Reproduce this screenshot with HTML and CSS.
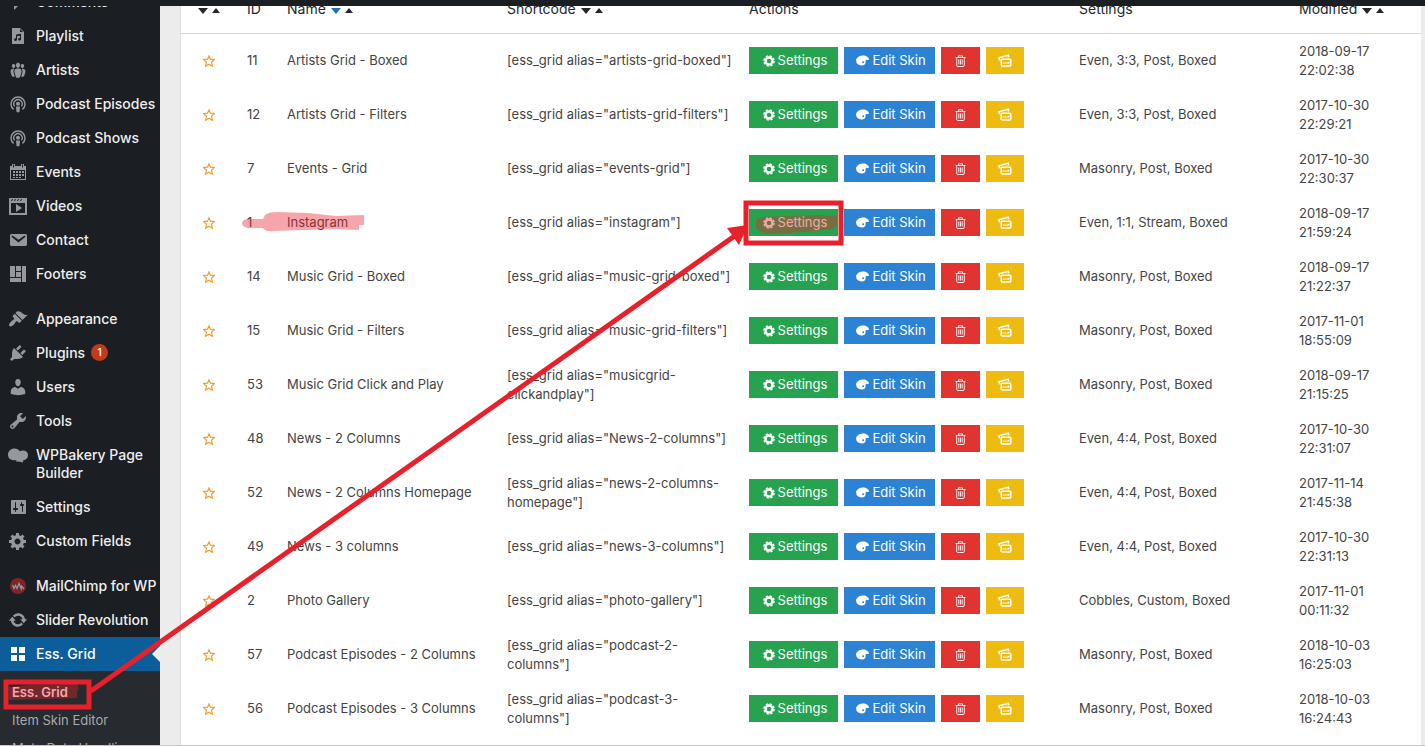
FILE: index.html
```html
<!DOCTYPE html>
<html lang="en">
<head>
    <meta charset="UTF-8">
    <title>Ess. Grid</title>
    <meta name="viewport" content="width=device-width, initial-scale=1.0"/>
    <link rel="stylesheet" href="styles.css">
</head>
<body>
    <!-- shared icons -->
    <svg class="icon-defs" aria-hidden="true">
        <symbol id="i-podcast" viewBox="0 0 20 20">
            <g fill="none" stroke="currentColor">
                <path d="M5.6 15.4a7 7 0 1 1 8.8 0" stroke-width="1.5"/>
                <path d="M6.6 12.4a4.2 4.2 0 1 1 6.8 0" stroke-width="1.4"/>
            </g>
            <circle cx="10" cy="9.7" r="2"/>
            <path d="M8 12.6h4l-.5 5.2q-1.500 1.200-3 0z"/>
        </symbol>
        <symbol id="i-star" viewBox="0 0 12 12">
            <path d="M6 .9l1.500 3.300 3.900.4-2.900 2.600.9 4L6 9.200l-3.400 2 .9-4L.6 4.600l3.900-.4z" fill="none" stroke="currentColor" stroke-width="1.200"/>
        </symbol>
        <symbol id="i-cog" viewBox="0 0 12 12">
            <g fill="none" stroke="currentColor">
                <circle cx="6" cy="6" r="3.500" stroke-width="2.400"/>
                <circle cx="6" cy="6" r="5.100" stroke-width="1.400" stroke-dasharray="2.400 1.600"/>
            </g>
        </symbol>
        <symbol id="i-palette" viewBox="0 0 13 11">
            <path fill-rule="evenodd" d="M6.300.5C9.800.1 12.800 2 12.900 4.200c0 1.100-1 .8-2.200.7-1.300-.1-1.200.8-1.100 1.800.2 2.100-1.100 3.800-4 3.800C2.300 10.500.1 8.300.1 5.600.1 2.900 3 .9 6.300.5zM7.200 6.200a1 1 0 1 0 0 2 1 1 0 0 0 0-2z"/>
        </symbol>
        <symbol id="i-trash" viewBox="0 0 11 12">
            <path d="M.5 2.500h10M3.500 2.300V.8h4v1.500M1.700 2.700v7.500q0 1.300 1.300 1.300h5q1.300 0 1.300-1.300V2.700M3.800 4.500V9.500M5.500 4.500V9.500M7.200 4.500V9.500" fill="none" stroke="currentColor" stroke-width=".9"/>
        </symbol>
        <symbol id="i-pictures" viewBox="0 0 14 13">
            <path d="M1.500 6.300L1 3.800l9.200-2.600.5 2.300" fill="none" stroke="currentColor" stroke-width="1.700"/>
            <rect x="3.200" y="5.300" width="9.600" height="6.700" rx="1" fill="none" stroke="currentColor" stroke-width="1.500"/>
            <path d="M4.500 8.200l1.700.9 1.300-.9 1.300.7 2.700-1.700v2.300h-7z"/>
        </symbol>
    </svg>

    <div class="admin-bar"></div>

    <div class="wrap">
        <nav class="sidebar">
            <ul class="menu">
                <li><a href="#"><svg class="icon" viewBox="0 0 20 20"><path d="M5 2h9q2 0 2 2v7q0 2-2 2h-3l-5 5v-5H5q-2 0-2-2V4q0-2 2-2z"/></svg><span>Comments</span></a></li>
                <li><a href="#"><svg class="icon" viewBox="0 0 20 20"><path d="M12 2l4 4v12H4V2h8zm0 4h3l-3-3v3zm1 7.260V8.090c0-.11-.04-.21-.12-.29-.07-.08-.16-.11-.27-.1 0 0-3.970.71-4.250.78C8.070 8.540 8 8.800 8 9v3.370c-.2-.09-.42-.07-.6-.07-.38 0-.7.13-.96.39-.26.27-.4.58-.4.96 0 .37.14.69.4.95.26.27.58.4.96.4.34 0 .7-.04.96-.26.26-.23.64-.65.64-1.120V10.300l3-.6V12c-.67-.2-1.170.04-1.440.31-.26.26-.39.58-.39.95 0 .38.13.69.39.96.27.26.71.39 1.080.39.38 0 .7-.13.96-.39.26-.27.4-.58.4-.96z"/></svg><span>Playlist</span></a></li>
                <li><a href="#"><svg class="icon" viewBox="0 0 20 20"><path d="M8.030 4.460c-.29 1.280.55 3.460 1.970 3.460 1.410 0 2.250-2.180 1.960-3.460-.22-.98-1.080-1.630-1.960-1.630-.89 0-1.740.65-1.970 1.630zm-4.130.9c-.25 1.080.47 2.930 1.670 2.930s1.920-1.850 1.670-2.930c-.19-.83-.92-1.390-1.670-1.390s-1.480.56-1.670 1.390zm8.860 0c-.25 1.080.47 2.930 1.660 2.930 1.200 0 1.920-1.850 1.670-2.930-.19-.83-.92-1.390-1.670-1.390-.74 0-1.470.56-1.660 1.390zm-.59 11.430l1.250-4.300C14.200 10 12.710 8.470 10 8.470c-2.720 0-4.210 1.530-3.440 4.020l1.260 4.300C8.050 17.510 9 18 10 18c.98 0 1.940-.49 2.170-1.210zm-6.100-7.630c-.49.67-.96 1.830-.42 3.590l1.120 3.790c-.34.2-.77.31-1.200.31-.85 0-1.650-.41-1.850-1.030l-1.070-3.650c-.65-2.110.61-3.400 2.920-3.400.27 0 .54.02.79.06-.1.1-.2.22-.29.33zm8.350-.39c2.310 0 3.580 1.290 2.920 3.400l-1.070 3.650c-.2.62-1 1.030-1.850 1.030-.43 0-.86-.11-1.200-.31l1.110-3.770c.55-1.780.08-2.940-.42-3.610-.08-.11-.18-.23-.28-.33.25-.04.51-.06.79-.06z"/></svg><span>Artists</span></a></li>
                <li><a href="#"><svg class="icon"><use href="#i-podcast"/></svg><span>Podcast Episodes</span></a></li>
                <li><a href="#"><svg class="icon"><use href="#i-podcast"/></svg><span>Podcast Shows</span></a></li>
                <li><a href="#"><svg class="icon" viewBox="0 0 20 20"><path fill-rule="evenodd" d="M2 4h2V2h3v2h6V2h3v2h2v14H2zm1 4v9h14V8zM5 2.500v3h1v-3zm9 0v3h1v-3z"/><path d="M8 9h2v2H8zm3 0h2v2h-2zm3 0h2v2h-2zM5 12h2v2H5zm3 0h2v2H8zm3 0h2v2h-2zm3 0h2v2h-2zM5 15h2v1H5zm3 0h2v1H8zm3 0h2v1h-2zM5 9h2v2H5z"/></svg><span>Events</span></a></li>
                <li><a href="#"><svg class="icon" viewBox="0 0 20 20"><path fill-rule="evenodd" d="M1 2h18v17H1zm2 5v10h14V7zM4 3L3 5h1l1-2zm3 0L6 5h1l1-2zm3 0L9 5h1l1-2zm3 0l-1 2h1l1-2z"/><path d="M8 8l6 4-6 4z"/></svg><span>Videos</span></a></li>
                <li><a href="#"><svg class="icon" viewBox="0 0 20 20"><path d="M3.870 4h13.250C18.370 4 19 4.590 19 5.790v8.420c0 1.190-.63 1.790-1.880 1.790H3.870c-1.250 0-1.880-.6-1.880-1.790V5.790c0-1.200.63-1.790 1.880-1.790zm6.620 8.600l6.740-5.530c.24-.2.43-.66.13-1.070-.29-.41-.82-.42-1.170-.17l-5.700 3.860L4.800 5.830c-.35-.25-.88-.24-1.170.17-.3.41-.11.87.13 1.070z"/></svg><span>Contact</span></a></li>
                <li><a href="#"><svg class="icon" viewBox="0 0 20 20"><path d="M2 2h5v11H2zm6 0h5v5H8zm6 0h4v16h-4zM8 8h5v5H8zm-6 6h11v4H2z"/></svg><span>Footers</span></a></li>
            </ul>
            <ul class="menu">
                <li><a href="#"><svg class="icon" viewBox="0 0 20 20"><path d="M14.480 11.060L7.410 3.990l1.500-1.500c.5-.56 2.300-.47 3.510.32 1.210.8 1.430 1.280 2.910 2.100 1.180.64 2.450 1.260 4.450.85zm-.71.71L6.700 4.700 4.930 6.470c-.39.39-.39 1.020 0 1.410l1.060 1.060c.39.39.39 1.030 0 1.420-.6.6-1.430 1.110-2.210 1.690-.35.26-.7.53-1.010.84C1.430 14.230.4 16.080 1.400 17.070c.99 1 2.840-.03 4.180-1.360.31-.31.58-.66.85-1.020.57-.78 1.080-1.610 1.690-2.210.39-.39 1.020-.39 1.410 0l1.060 1.060c.39.39 1.020.39 1.410 0z"/></svg><span>Appearance</span></a></li>
                <li><a href="#"><svg class="icon" viewBox="0 0 20 20"><path d="M13.110 4.360L9.870 7.600 8 5.730l3.240-3.240c.35-.34 1.050-.2 1.560.32.52.51.66 1.210.31 1.550zm-8 1.770l.91-1.120 9.010 9.010-1.190.84c-.71.71-2.630 1.160-3.820 1.160H6.140L4.900 17.260c-.59.59-1.540.59-2.120 0-.59-.58-.59-1.530 0-2.120l1.240-1.240v-3.880c0-1.130.4-3.190 1.090-3.890zm7.260 3.970l3.240-3.240c.34-.35 1.040-.21 1.550.31.52.51.66 1.210.31 1.550l-3.240 3.250z"/></svg><span>Plugins</span><span class="count">1</span></a></li>
                <li><a href="#"><svg class="icon" viewBox="0 0 20 20"><path d="M10 9.250c-2.270 0-2.730-3.440-2.730-3.440C7 4.020 7.820 2 9.970 2c2.160 0 2.980 2.020 2.710 3.810 0 0-.41 3.440-2.680 3.440zM7.300 10L10 11.820 12.720 10c2.390 0 4.520 2.330 4.520 4.530v2.490s-3.650 1.130-7.240 1.130c-3.650 0-7.240-1.130-7.240-1.130v-2.490c0-2.250 1.940-4.480 4.540-4.530z"/></svg><span>Users</span></a></li>
                <li><a href="#"><svg class="icon" viewBox="0 0 20 20"><path d="M16.680 9.770c-1.340 1.340-3.300 1.670-4.950.99l-5.410 6.520c-.99.99-2.590.99-3.580 0s-.99-2.590 0-3.570l6.520-5.420c-.68-1.650-.35-3.610.99-4.950 1.280-1.280 3.120-1.620 4.720-1.060l-2.890 2.890 2.820 2.820 2.860-2.870c.53 1.580.18 3.390-1.080 4.650zM3.810 16.210c.4.39 1.040.39 1.430 0 .4-.4.4-1.040 0-1.430-.39-.4-1.030-.4-1.430 0-.39.39-.39 1.030 0 1.430z"/></svg><span>Tools</span></a></li>
                <li><a href="#"><svg class="icon" viewBox="0 0 20 20"><path d="M6.500 3.500c2.200 0 4.200 1 5.300 2.700C14.500 4.800 20 5.500 20 10.200c0 2.900-2 4.900-4.800 5.100l-.2 2.200-3-.8-4-.3.600-1.200C4 15.900 0 14 0 9.700c0-3.600 2.900-6.200 6.500-6.200z"/></svg><span>WPBakery Page Builder</span></a></li>
                <li><a href="#"><svg class="icon" viewBox="0 0 20 20"><path d="M18 16V4c0-.55-.45-1-1-1H4c-.55 0-1 .45-1 1v12c0 .55.45 1 1 1h13c.55 0 1-.45 1-1zM8 11h1c.55 0 1 .45 1 1s-.45 1-1 1H8v1.500c0 .28-.22.5-.5.5s-.5-.22-.5-.5V13H6c-.55 0-1-.45-1-1s.45-1 1-1h1V5.500c0-.28.22-.5.5-.5s.5.22.5.5V11zm6-2h-1c-.55 0-1-.45-1-1s.45-1 1-1V7h0V5.500c0-.28.22-.5.5-.5s.5.22.5.5V7h1c.55 0 1 .45 1 1s-.45 1-1 1v5.500c0 .28-.22.5-.5.5s-.5-.22-.5-.5V9z"/></svg><span>Settings</span></a></li>
                <li><a href="#"><svg class="icon" viewBox="0 0 20 20"><path d="M18 12h-2.180c-.17.7-.44 1.350-.81 1.930l1.540 1.540-2.100 2.100-1.540-1.540c-.58.36-1.230.63-1.910.79V19H8v-2.180c-.68-.16-1.330-.43-1.910-.79l-1.540 1.540-2.120-2.120 1.540-1.540c-.36-.58-.63-1.230-.79-1.910H1V9.030h2.170c.16-.7.44-1.350.8-1.940L2.430 5.550l2.100-2.100 1.540 1.540c.58-.37 1.240-.64 1.930-.81V2h3v2.180c.68.16 1.330.43 1.910.79l1.540-1.540 2.120 2.120-1.540 1.540c.36.59.64 1.240.8 1.940H18V12zm-8.500 1.500c1.660 0 3-1.340 3-3s-1.340-3-3-3-3 1.340-3 3 1.340 3 3 3z"/></svg><span>Custom Fields</span></a></li>
            </ul>
            <ul class="menu">
                <li><a href="#"><svg class="icon" viewBox="0 0 20 20"><circle class="chimp-bg" cx="10" cy="10" r="8"/><path d="M4.500 9l1.500 3.500L7.500 9.500 9 12.500l2-5 2.200 5.200.3-2.500 2.500 2.800" fill="none" stroke="currentColor" stroke-width="1.300"/></svg><span>MailChimp for WP</span></a></li>
                <li><a href="#"><svg class="icon" viewBox="0 0 20 20"><path d="M10.200 3.280c3.530 0 6.430 2.610 6.920 6h2.080l-3.500 4-3.500-4h2.320c-.45-1.970-2.210-3.450-4.320-3.450-1.450 0-2.730.71-3.540 1.780L4.950 5.660C6.230 4.200 8.110 3.280 10.200 3.280zm-.4 13.440c-3.520 0-6.430-2.610-6.920-6H.8l3.500-4c1.170 1.330 2.330 2.670 3.500 4H5.480c.45 1.970 2.210 3.450 4.320 3.450 1.450 0 2.730-.71 3.540-1.780l1.710 1.950c-1.280 1.460-3.150 2.380-5.250 2.380z"/></svg><span>Slider Revolution</span></a></li>
                <li class="current"><a href="#"><svg class="icon" viewBox="0 0 20 20"><path d="M3 3h6v6H3zm8 0h6v6h-6zM3 11h6v6H3zm8 0h6v6h-6z"/></svg><span>Ess. Grid</span></a></li>
            </ul>
            <ul class="submenu">
                <li class="active"><a href="#">Ess. Grid</a></li>
                <li><a href="#">Item Skin Editor</a></li>
                <li><a href="#">Meta Data Handling</a></li>
            </ul>
        </nav>

        <main class="content">
            <div class="panel">
                <table class="grid-table">
                    <thead>
                        <tr>
                            <th class="col-star"><span class="sort"></span></th>
                            <th class="col-id">ID</th>
                            <th class="col-name">Name <span class="sort sorted"></span></th>
                            <th class="col-code">Shortcode <span class="sort"></span></th>
                            <th class="col-actions">Actions</th>
                            <th class="col-settings">Settings</th>
                            <th class="col-modified">Modified <span class="sort"></span></th>
                        </tr>
                    </thead>
                    <tbody id="gridRows"></tbody>
                </table>
            </div>
        </main>

        <!-- marker strokes, boxes and arrow -->
        <svg class="notes" aria-hidden="true">
            <g class="marker">
                <path d="M248 219h15l2-4q3-3 13-3l30 1 28 3 28-1v10h-5v5l-24-1-30 1-32 1q-7 1-10-3H248q-6-1-6-5 1-4 6-4z"/>
                <path d="M757 219q6-3 30-3l36-1 14 1v10l-3 1v2l-30 3-34 2q-12-1-14-7-1-5 1-7z"/>
                <path d="M9 687l20-2 48-1q3 4 0 8v6l-30 1-38 1z"/>
            </g>
            <g class="pen">
                <rect x="6" y="682" width="83" height="25"/>
                <rect x="746" y="203" width="95" height="40"/>
                <path d="M91 691L736 235"/>
            </g>
            <path class="arrow-head" d="M748 225l-21 3 12 17z"/>
        </svg>
    </div>

    <script>
        const grids = [
            [11, "Artists Grid - Boxed", "artists-grid-boxed", "Even, 3:3, Post, Boxed", "2018-09-17 22:02:38"],
            [12, "Artists Grid - Filters", "artists-grid-filters", "Even, 3:3, Post, Boxed", "2017-10-30 22:29:21"],
            [7, "Events - Grid", "events-grid", "Masonry, Post, Boxed", "2017-10-30 22:30:37"],
            [1, "Instagram", "instagram", "Even, 1:1, Stream, Boxed", "2018-09-17 21:59:24"],
            [14, "Music Grid - Boxed", "music-grid-boxed", "Masonry, Post, Boxed", "2018-09-17 21:22:37"],
            [15, "Music Grid - Filters", "music-grid-filters", "Masonry, Post, Boxed", "2017-11-01 18:55:09"],
            [53, "Music Grid Click and Play", "musicgrid-clickandplay", "Masonry, Post, Boxed", "2018-09-17 21:15:25"],
            [48, "News - 2 Columns", "News-2-columns", "Even, 4:4, Post, Boxed", "2017-10-30 22:31:07"],
            [52, "News - 2 Columns Homepage", "news-2-columns-homepage", "Even, 4:4, Post, Boxed", "2017-11-14 21:45:38"],
            [49, "News - 3 columns", "news-3-columns", "Even, 4:4, Post, Boxed", "2017-10-30 22:31:13"],
            [2, "Photo Gallery", "photo-gallery", "Cobbles, Custom, Boxed", "2017-11-01 00:11:32"],
            [57, "Podcast Episodes - 2 Columns", "podcast-2-columns", "Masonry, Post, Boxed", "2018-10-03 16:25:03"],
            [56, "Podcast Episodes - 3 Columns", "podcast-3-columns", "Masonry, Post, Boxed", "2018-10-03 16:24:43"]
        ];

        document.getElementById("gridRows").innerHTML = grids.map(([id, name, alias, settings, modified]) => `
            <tr>
                <td class="col-star"><button class="star" aria-label="Favorite"><svg><use href="#i-star"/></svg></button></td>
                <td>${id}</td>
                <td>${name}</td>
                <td class="col-code">[ess_grid alias="${alias}"]</td>
                <td>
                    <div class="actions">
                        <button class="btn btn-green"><svg class="cog"><use href="#i-cog"/></svg>Settings</button>
                        <button class="btn btn-blue"><svg class="palette"><use href="#i-palette"/></svg>Edit Skin</button>
                        <button class="btn btn-red" aria-label="Delete"><svg class="trash"><use href="#i-trash"/></svg></button>
                        <button class="btn btn-yellow" aria-label="Duplicate"><svg class="pictures"><use href="#i-pictures"/></svg></button>
                    </div>
                </td>
                <td>${settings}</td>
                <td>${modified}</td>
            </tr>`).join("");
    </script>
</body>
</html>
```
FILE: styles.css
```css
* {
    box-sizing: border-box;
}
body {
    margin: 0;
    background: #fff;
    font-family: Inter, "Liberation Sans", sans-serif;
    font-size: 13px;
    color: #444;
}
ul {
    list-style: none;
    margin: 0;
    padding: 0;
}
a {
    text-decoration: none;
    color: inherit;
}
svg {
    fill: currentColor;
}
.icon-defs {
    position: absolute;
    width: 0;
    height: 0;
}
.admin-bar {
    position: absolute;
    top: 0;
    left: 0;
    right: 0;
    height: 6px;
    background: #1b1e23;
    z-index: 2;
}
.wrap {
    position: relative;
    display: flex;
    height: calc(100vh - 1px);
    overflow: hidden;
    border-bottom: 1px solid #c8c8c8;
}

/* sidebar, scrolled past the first items */
.sidebar {
    flex: none;
    display: flex;
    flex-direction: column;
    width: 160px;
    margin-top: -15px;
    background: #1b1e23;
}
.menu {
    margin-bottom: 11px;
    font-size: 14px;
    font-weight: 500;
    line-height: 18px;
    color: #eee;
}
.menu:nth-of-type(3) {
    margin-bottom: 0;
}
.menu a {
    display: flex;
    gap: 8px;
    padding: 8px 0 8px 8px;
}
.icon {
    flex: none;
    width: 20px;
    height: 20px;
    margin: -1px 0;
    color: #95999d;
}
.chimp-bg {
    fill: #7d2529;
}
.count {
    width: 17px;
    height: 17px;
    margin-left: -2px;
    border-radius: 50%;
    background: #c13a1a;
    font-size: 10px;
    font-weight: 600;
    line-height: 17px;
    text-align: center;
}
.current {
    position: relative;
    background: #0c5e9b;
    color: #fff;
}
.current .icon {
    color: #fff;
}
.current::after {
    content: "";
    position: absolute;
    right: 0;
    top: 9px;
    border: 8px solid transparent;
    border-left: none;
    border-right-color: #ececec;
}
.submenu {
    flex: 1;
    padding-top: 7px;
    background: #272a2f;
    color: #a8abae;
    line-height: 18px;
}
.submenu a {
    display: block;
    padding: 5px 12px;
    white-space: nowrap;
}
.submenu .active {
    color: #fff;
    font-weight: 600;
}

/* grid list */
.content {
    flex: 1;
    padding: 0 4px 0 20px;
    background: #ececec;
}
.panel {
    display: flow-root;
    height: 100%;
    border-left: 1px solid #ddd;
    background: #fff;
}
.grid-table {
    width: 100%;
    margin-top: -17px;
    border-collapse: separate;
    border-spacing: 0;
    table-layout: fixed;
}
th, td {
    padding: 0 10px;
    text-align: left;
    vertical-align: middle;
    line-height: 19px;
}
th {
    height: 51px;
    border-bottom: 1px solid #d8d8d8;
    font-size: 14px;
    font-weight: 400;
    color: #23282d;
    white-space: nowrap;
}
td {
    height: 54px;
    padding-bottom: 1px;
}
th.col-star {
    width: 56px;
    padding: 0 0 0 17px;
}
td.col-star {
    padding: 0 0 1px 22px;
}
.col-id {
    width: 40px;
}
.col-name {
    width: 220px;
}
.col-code {
    width: 242px;
    padding-right: 6px;
}
.col-actions {
    width: 330px;
}
.col-settings {
    width: 220px;
}
.sort {
    display: inline-flex;
    align-items: center;
    gap: 4px;
    margin-left: 1px;
}
.sort::before, .sort::after {
    content: "";
    border: solid transparent;
}
.sort::before {
    border-width: 6px 5px 0;
    border-top-color: #23282d;
}
.sort::after {
    border-width: 0 4px 5px;
    border-bottom-color: #23282d;
}
.sort.sorted::before {
    border-top-color: #1f6fc0;
}
.col-star .sort {
    margin-left: 0;
}
.star {
    display: block;
    width: 12px;
    height: 12px;
    padding: 0;
    border: none;
    background: none;
    color: #f39c2d;
}
.star svg {
    display: block;
    width: 12px;
    height: 12px;
}
.actions {
    display: flex;
    gap: 6px;
}
.btn {
    display: flex;
    align-items: center;
    justify-content: center;
    gap: 3px;
    height: 27px;
    padding: 0;
    border: none;
    color: #fff;
    font: inherit;
    cursor: pointer;
}
.btn-green {
    width: 89px;
    padding-left: 3px;
    background: #27a350;
}
.btn-blue {
    width: 91px;
    padding-left: 3px;
    background: #2c83d4;
}
.btn-red {
    width: 39px;
    background: #e13431;
}
.btn-yellow {
    width: 38px;
    background: #eebb11;
}
.cog {
    width: 12px;
    height: 12px;
}
.palette {
    width: 13px;
    height: 11px;
}
.trash {
    width: 11px;
    height: 12px;
}
.pictures {
    width: 14px;
    height: 13px;
}

/* annotations */
.notes {
    position: absolute;
    top: 0;
    left: 0;
    width: 100%;
    height: 100%;
    pointer-events: none;
}
.marker {
    fill: #e8202b;
    opacity: 0.4;
}
.pen {
    fill: none;
    stroke: #e8202b;
    stroke-width: 5;
}
.arrow-head {
    fill: #e8202b;
}
```
